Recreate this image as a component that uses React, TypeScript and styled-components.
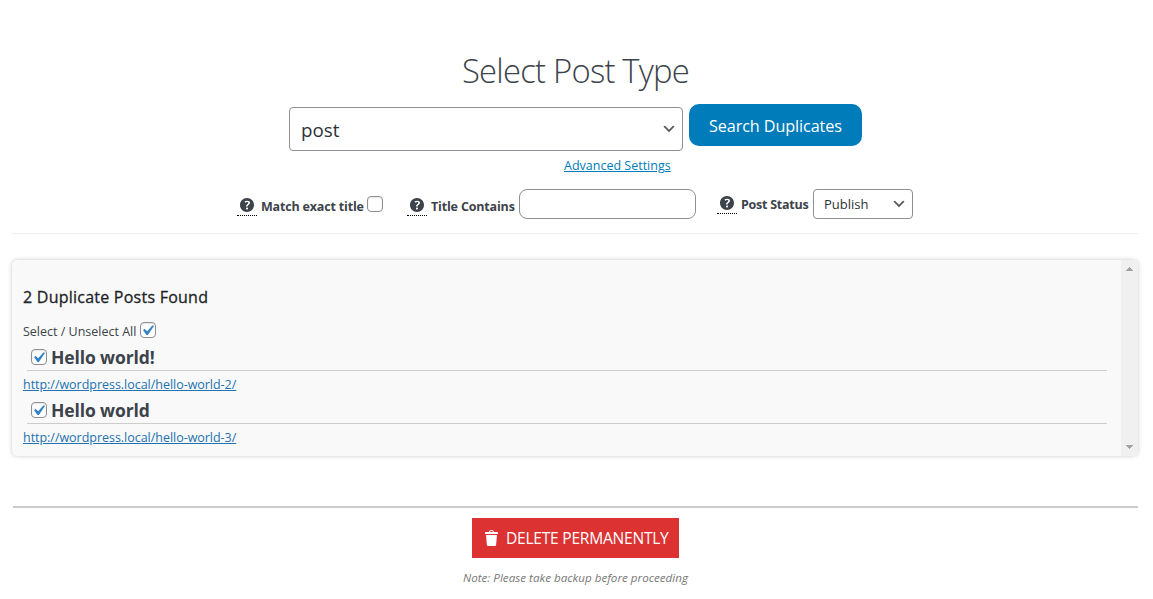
import React from "react";
import styled, { createGlobalStyle } from "styled-components";

const GlobalStyle = createGlobalStyle`
  * { box-sizing: border-box; }
  body {
    margin: 0;
    background: #fff;
    color: #3c434a;
    font-family: "Segoe UI", "Open Sans", "Noto Sans", sans-serif;
    font-size: 12.5px;
    overflow: hidden;
  }
`;

const Page = styled.main`
  width: 1153px;
  height: 599px;
  padding: 48px 14px 0 12px;
  display: flex;
  flex-direction: column;
`;

/* A single line of text with a reserved width, so neighbours keep their place. */
const Label = styled.span<{
  $w: number;
  $size?: number;
  $weight?: number;
  $track?: number;
}>`
  display: block;
  flex: none;
  width: ${(p) => p.$w}px;
  white-space: nowrap;
  font-size: ${(p) => p.$size ?? 12.5}px;
  font-weight: ${(p) => p.$weight ?? 400};
  letter-spacing: ${(p) => p.$track ?? 0}px;
  line-height: 18px;
`;

const Title = styled.h1`
  margin: 0 0 0 450px;
  height: 45px;
  line-height: 45px;
  font-size: 32.8px;
  font-weight: 300;
  letter-spacing: -0.77px;
  white-space: nowrap;
`;

const SearchRow = styled.div`
  display: flex;
  align-items: flex-start;
  gap: 6px;
  margin: 11px 0 0 277px;
  height: 47px;
`;

const Select = styled.div<{ $large?: boolean }>`
  display: flex;
  align-items: center;
  justify-content: space-between;
  flex: none;
  width: ${(p) => (p.$large ? 394 : 100)}px;
  height: ${(p) => (p.$large ? 44 : 30)}px;
  margin-top: ${(p) => (p.$large ? 3 : 0)}px;
  padding: ${(p) => (p.$large ? "0 5px 0 11px" : "0 5px 0 10px")};
  border: 1px solid #8c8f94;
  border-radius: 4px;
  background: #fff;
  color: #2c3338;

  > span {
    padding-top: ${(p) => (p.$large ? 3 : 1)}px;
    line-height: 19px;
  }
`;

const SearchButton = styled.button`
  width: 173px;
  height: 42px;
  padding: 2px 0 0 20px;
  border: 0;
  border-radius: 10px;
  background: #007cba;
  color: #fff;
  font-family: inherit;
  text-align: left;
`;

const AdvancedLink = styled.a`
  margin: 6px 0 0 552px;
  height: 18px;
  color: #007cba;
  text-decoration: underline;
`;

const Filters = styled.div`
  display: flex;
  margin: 14px 0 0 225px;
  height: 30px;
`;

const Filter = styled.div<{ $shift?: number; $after?: number }>`
  display: flex;
  margin-right: ${(p) => p.$after ?? 0}px;

  > ${Label} { margin-top: ${(p) => 9 - (p.$shift ?? 0)}px; }
`;

const Help = styled.span<{ $raised?: boolean }>`
  width: 20px;
  height: 19px;
  margin-top: ${(p) => (p.$raised ? 6 : 8)}px;
  margin-right: 4px;
  border-bottom: 1px dotted #000;

  svg { display: block; margin-top: -2px; }
`;

const Checkbox = styled.span<{ $y?: number }>`
  display: block;
  flex: none;
  width: 16px;
  height: 16px;
  margin-top: ${(p) => p.$y ?? 0}px;
  border: 1px solid #8c8f94;
  border-radius: 4px;
  background: #fff;
  box-shadow: inset 0 1px 2px rgba(0, 0, 0, 0.1);

  svg { display: block; margin: -3px 0 0 -4px; }
`;

const TextInput = styled.input`
  width: 177px;
  height: 30px;
  border: 1px solid #8c8f94;
  border-radius: 8px;
  background: #fff;
`;

const ThinRule = styled.hr`
  width: 1126px;
  height: 1px;
  margin: 14px 0 0;
  border: 0;
  background: #f0f0f1;
`;

const Results = styled.section`
  display: flex;
  justify-content: space-between;
  width: 1126px;
  height: 196px;
  margin-top: 26px;
  border-radius: 5px;
  background: #f9f9f9;
  box-shadow: 0 0 4px rgba(0, 0, 0, 0.22);
  overflow: hidden;
`;

const ResultList = styled.div`
  width: 1095px;
  padding: 28px 0 0 11px;
`;

const ResultsHeading = styled.h2`
  margin: 0;
  color: #1d2327;
  -webkit-text-stroke: 0.3px #1d2327;
`;

const SelectAll = styled.div`
  display: flex;
  height: 27px;
  margin-top: 15px;

  > ${Label} { padding-top: 2px; }
`;

const ResultTitle = styled.div`
  display: flex;
  gap: 4px;
  height: 23px;
  margin-left: 4px;
  padding-left: 4px;
  border-bottom: 1px solid #ccc;
`;

const ResultLink = styled.a`
  display: block;
  height: 30px;
  padding-top: 5px;
  color: #2271b1;
  text-decoration: underline;
`;

const ScrollTrack = styled.div`
  display: flex;
  flex-direction: column;
  justify-content: space-between;
  align-items: center;
  width: 17px;
  padding: 7px 0;
  background: #f0f0f0;
`;

const ThickRule = styled.hr`
  width: 1125px;
  height: 2px;
  margin: 50px 0 0 1px;
  border: 0;
  background: #ccc;
`;

const DeleteButton = styled.button`
  display: flex;
  align-items: center;
  width: 207px;
  height: 40px;
  margin: 10px 0 0 460px;
  padding: 0 0 0 10px;
  border: 0;
  background: #dc3232;
  color: #fff;
  font-family: inherit;
  text-align: left;

  svg { margin-right: 4px; }
`;

const Note = styled.p`
  margin: 11px 0 0 451px;
  color: #777;
  font-style: italic;
`;

const Chevron = () => (
  <svg width="16" height="16" viewBox="0 0 20 20">
    <path d="M5 6l5 5 5-5 2 1-7 7-7-7 2-1z" fill="#555" />
  </svg>
);

const HelpMark = ({ raised }: { raised?: boolean }) => (
  <Help $raised={raised}>
    <svg width="20" height="20" viewBox="0 0 20 20">
      <path
        fill="#3c434a"
        d="M17 10c0-3.87-3.14-7-7-7-3.87 0-7 3.13-7 7s3.13 7 7 7c3.86 0 7-3.13 7-7zm-6.3 1.48H9.14v-.43c0-.38.08-.7.24-.98s.46-.57.88-.89c.41-.29.68-.53.81-.71.14-.18.2-.39.2-.62 0-.25-.09-.44-.28-.58-.19-.13-.45-.19-.79-.19-.58 0-1.25.19-2 .57l-.64-1.28c.87-.49 1.8-.74 2.77-.74.81 0 1.45.2 1.92.58.48.39.71.91.71 1.55 0 .43-.09.8-.29 1.11-.19.32-.57.67-1.11 1.06-.38.28-.61.49-.71.63-.1.15-.15.34-.15.57v.35zm-1.47 2.74c-.18-.17-.27-.42-.27-.73 0-.33.08-.58.26-.75s.43-.25.77-.25c.32 0 .57.09.75.26s.27.42.27.74c0 .3-.09.55-.27.72-.18.18-.43.27-.75.27-.33 0-.58-.09-.76-.26z"
      />
    </svg>
  </Help>
);

const Tick = () => (
  <svg width="21" height="21" viewBox="0 0 20 20">
    <path
      d="M14.83 4.89l1.34.94-5.81 8.38H9.02L5.78 9.67l1.34-1.25 2.57 2.4z"
      fill="#3582c4"
    />
  </svg>
);

const Trash = () => (
  <svg width="20" height="20" viewBox="0 0 20 20">
    <path
      fill="#fff"
      fillRule="evenodd"
      d="M12 4h3c.6 0 1 .4 1 1v1H3V5c0-.6.5-1 1-1h3c.2-1.1 1.3-2 2.5-2s2.3.9 2.5 2zM8 4h3c-.2-.6-.9-1-1.5-1S8.2 3.4 8 4zM4 7h11l-.9 10.1c0 .5-.5.9-1 .9H5.9c-.5 0-.9-.4-1-.9L4 7z"
    />
  </svg>
);

const Arrow = ({ down }: { down?: boolean }) => (
  <svg width="7" height="4" viewBox="0 0 7 4" shapeRendering="crispEdges">
    <path d={down ? "M0 0h7L3.5 4z" : "M0 4h7L3.5 0z"} fill="#a3a3a3" />
  </svg>
);

const posts = [
  { title: "Hello world!", url: "http://wordpress.local/hello-world-2/" },
  { title: "Hello world", url: "http://wordpress.local/hello-world-3/" },
];

export default function App() {
  return (
    <>
      <GlobalStyle />
      <Page>
        <Title>Select Post Type</Title>
        <SearchRow>
          <Select $large>
            <Label $w={60} $size={18.8}>post</Label>
            <Chevron />
          </Select>
          <SearchButton>
            <Label $w={134} $size={16.2} $track={-0.1}>Search Duplicates</Label>
          </SearchButton>
        </SearchRow>
        <AdvancedLink>
          <Label $w={107}>Advanced Settings</Label>
        </AdvancedLink>
        <Filters>
          <Filter $after={24}>
            <HelpMark />
            <Label $w={106} $weight={700} $track={-0.18}>Match exact title</Label>
            <Checkbox $y={7} />
          </Filter>
          <Filter $after={21}>
            <HelpMark />
            <Label $w={88} $weight={700} $track={-0.17}>Title Contains</Label>
            <TextInput />
          </Filter>
          <Filter $shift={2}>
            <HelpMark raised />
            <Label $w={72} $weight={700} $track={-0.25}>Post Status</Label>
            <Select>
              <Label $w={46} $size={13}>Publish</Label>
              <Chevron />
            </Select>
          </Filter>
        </Filters>
        <ThinRule />
        <Results>
          <ResultList>
            <ResultsHeading>
              <Label $w={190} $size={16} $track={0.24}>2 Duplicate Posts Found</Label>
            </ResultsHeading>
            <SelectAll>
              <Label $w={117}>Select / Unselect All</Label>
              <Checkbox $y={1}><Tick /></Checkbox>
            </SelectAll>
            {posts.map((post) => (
              <React.Fragment key={post.url}>
                <ResultTitle>
                  <Checkbox $y={1}><Tick /></Checkbox>
                  <Label $w={110} $size={17.5} $weight={700} $track={-0.12}>{post.title}</Label>
                </ResultTitle>
                <ResultLink>
                  <Label $w={214} $track={-0.03}>{post.url}</Label>
                </ResultLink>
              </React.Fragment>
            ))}
          </ResultList>
          <ScrollTrack>
            <Arrow />
            <Arrow down />
          </ScrollTrack>
        </Results>
        <ThickRule />
        <DeleteButton>
          <Trash />
          <Label $w={165} $size={15.6} $track={-0.26}>DELETE PERMANENTLY</Label>
        </DeleteButton>
        <Note>
          <Label $w={226} $size={11.6} $track={0.02}>Note: Please take backup before proceeding</Label>
        </Note>
      </Page>
    </>
  );
}
